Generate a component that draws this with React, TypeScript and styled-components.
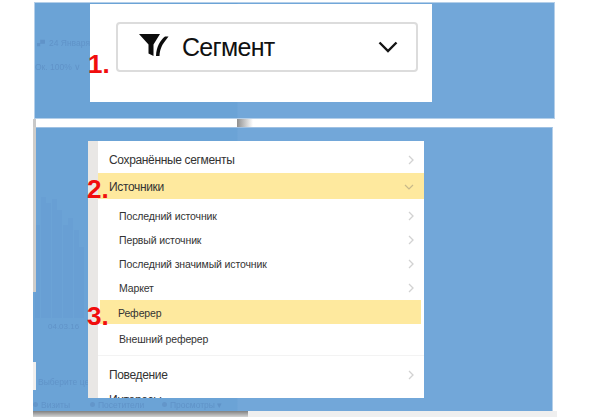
import styled, { createGlobalStyle } from 'styled-components';

const GlobalStyle = createGlobalStyle`
  html, body {
    margin: 0;
    padding: 0;
    background: #fff;
    font-family: 'Liberation Sans', Arial, sans-serif;
  }
`;

const Page = styled.div`
  width: 591px;
  height: 417px;
  overflow: hidden;
  padding: 2px 0 0 33px;
  box-sizing: border-box;
`;

const TopPanel = styled.section`
  width: 521px;
  height: 117px;
  margin-left: 1px;
  box-sizing: border-box;
  border: 1px solid #b4cfe9;
  background: linear-gradient(90deg, #6ba3d6 0 202px, #72a7d9 203px);
  display: flex;
  align-items: flex-start;
`;

const TopGhost = styled.div`
  width: 55px;
  flex: none;
  padding-top: 35px;
  display: flex;
  flex-direction: column;
  gap: 14px;
  white-space: nowrap;
`;

const GhostText = styled.span`
  font-size: 8.5px;
  line-height: 10px;
  color: #6093c8;
  filter: blur(0.4px);
  display: flex;
  align-items: center;
  gap: 4px;
`;

const DateLine = styled(GhostText)`
  padding-left: 2px;
`;

const ScaleLine = styled(GhostText)`
  padding-left: 0;
`;

const Card = styled.div`
  position: relative;
  width: 342px;
  height: 98px;
  margin-top: 1px;
  background: #fff;
  box-sizing: border-box;
  padding: 18px 14px 0 26px;
`;

const Select = styled.div`
  height: 50px;
  box-sizing: border-box;
  border: 2px solid #dcdcdc;
  border-radius: 4px;
  display: flex;
  align-items: center;
  padding: 0 18px 0 21px;
`;

const SelectLabel = styled.span`
  font-size: 25px;
  line-height: 30px;
  letter-spacing: -0.7px;
  color: #111;
  margin-left: 13px;
  flex: 1;
`;

const FunnelSvg = styled.svg`
  margin-bottom: 4px;
  flex: none;
`;

const Marker = styled.span<{ $left: number; $top: number }>`
  position: absolute;
  left: ${p => p.$left}px;
  top: ${p => p.$top}px;
  font-size: 26px;
  line-height: 27px;
  font-weight: 700;
  color: #f10d0d;
  z-index: 2;
`;

const Gap = styled.div`
  width: 520px;
  height: 8px;
  background: linear-gradient(90deg, #c9c9c9 0 3px, #fff 3px 204px, #8f8f8f 204px, #fff 220px);
`;

const LowerPanel = styled.section`
  width: 520px;
  height: 284px;
  box-sizing: border-box;
  border-right: 1px solid #b4cfe9;
  border-top: 1px solid #9fc1e3;
  background: linear-gradient(90deg, #6ba3d6 0 204px, #72a7d9 205px);
  display: flex;
  flex-direction: column;
`;

const PanelBody = styled.div`
  display: flex;
  padding-top: 13px;
  height: 270px;
  box-sizing: border-box;
`;

const ChartColumn = styled.div`
  position: relative;
  width: 55px;
  flex: none;
  display: flex;
  flex-direction: column;
  white-space: nowrap;
  &::before {
    content: '';
    position: absolute;
    left: 0;
    top: -14px;
    width: 3px;
    height: 165px;
    background: #cfcdca;
  }
  &::after {
    content: '';
    position: absolute;
    left: 0;
    top: 221px;
    width: 3px;
    height: 28px;
    background: #f0efee;
  }
`;

const Bars = styled.div`
  height: 164px;
  margin-top: 13px;
  padding-left: 2px;
  display: flex;
  align-items: flex-end;
  gap: 0.5px;
`;

const Bar = styled.div<{ $h: number }>`
  width: 5px;
  height: ${p => p.$h}px;
  background: #689fd4;
`;

const ChartDate = styled(GhostText)`
  font-size: 8px;
  margin-top: 4px;
  margin-left: 15px;
`;

const GoalHint = styled(GhostText)`
  margin-top: 45px;
  margin-left: 5px;
`;

const MenuFrame = styled.div`
  position: relative;
  width: 336px;
  height: 257px;
  flex: none;
`;

const Menu = styled.div`
  height: 100%;
  overflow: hidden;
  background: #fff;
  border-left: 10px solid #e9e7e5;
  box-sizing: border-box;
  color: #333;
`;

const Row = styled.div<{ $h: number; $pt?: number; $active?: boolean }>`
  height: ${p => p.$h}px;
  box-sizing: border-box;
  padding: ${p => p.$pt ?? 0}px 10px 0 11px;
  display: flex;
  align-items: center;
  justify-content: space-between;
  font-size: 12px;
  letter-spacing: -0.35px;
  background: ${p => (p.$active ? '#fee99e' : 'transparent')};
`;

const SubList = styled.div`
  padding-top: 5px;
`;

const SubRow = styled.div<{ $active?: boolean }>`
  height: 24px;
  box-sizing: border-box;
  margin: 0 ${p => (p.$active ? '3px' : '0')} 0 ${p => (p.$active ? '2px' : '0')};
  padding: ${p => (p.$active ? '1px' : '0')} 10px 0 ${p => (p.$active ? '18px' : '21px')};
  display: flex;
  align-items: center;
  justify-content: space-between;
  font-size: 10.5px;
  letter-spacing: -0.13px;
  background: ${p => (p.$active ? '#fee99e' : 'transparent')};
`;

const PlainSubRow = styled(SubRow)`
  margin-top: 3px;
`;

const Divider = styled.div`
  height: 1px;
  margin-top: 4px;
  background: #f3f3f3;
`;

const Legend = styled.div`
  height: 13px;
  display: flex;
  align-items: center;
  white-space: nowrap;
`;

const LegendItem = styled(GhostText)<{ $w: number }>`
  width: ${p => p.$w}px;
  flex: none;
  gap: 3px;
`;

const LegendDot = styled.i`
  width: 5px;
  height: 5px;
  border-radius: 50%;
  background: #6396ca;
`;

const BottomShadow = styled.div`
  width: 524px;
  height: 7px;
  background: linear-gradient(180deg, #808080, #e2e2e2) 0 0 / 215px 100% no-repeat, #efefef;
`;

const Chevron = ({ color = '#d2d2d2' }: { color?: string }) => (
  <svg width="6" height="10" viewBox="0 0 6 10" fill="none">
    <path d="M1 1l4 4-4 4" stroke={color} strokeWidth="1.3" />
  </svg>
);

const DownChevron = () => (
  <svg width="10" height="6" viewBox="0 0 10 6" fill="none">
    <path d="M1 1l4 4 4-4" stroke="#c8b98a" strokeWidth="1.2" />
  </svg>
);

const SegmentIcon = () => (
  <FunnelSvg width="30" height="23" viewBox="0 0 30 23" fill="#0c0c0c">
    <path d="M0 0h21l-6.500 10.500V22l-5-2.500v-9z" />
    <path d="M29.500 2.500l-3.500 0c-5 4-8.500 10-9 19.500h3.500c.3-7 3-12 6-15.500z" />
  </FunnelSvg>
);

const BigChevron = () => (
  <svg width="20" height="12" viewBox="0 0 20 12" fill="none">
    <path d="M1.500 1.500L10 10l8.500-8.500" stroke="#151515" strokeWidth="2.400" />
  </svg>
);

const DateIcon = () => (
  <svg width="10" height="8" viewBox="0 0 10 8" fill="#6093c8">
    <path d="M0 4h4v4H0zM4 0h6v5H4z" />
  </svg>
);

const barHeights = [93, 121, 115, 119, 108, 93, 100, 88, 71];

const subItems = ['Последний источник', 'Первый источник', 'Последний значимый источник', 'Маркет'];

export default function App() {
  return (
    <Page>
      <GlobalStyle />
      <TopPanel>
        <TopGhost>
          <DateLine>
            <DateIcon />
            24 Января
          </DateLine>
          <ScaleLine>Ок. 100% ∨</ScaleLine>
        </TopGhost>
        <Card>
          <Marker $left={-2} $top={47}>1.</Marker>
          <Select>
            <SegmentIcon />
            <SelectLabel>Сегмент</SelectLabel>
            <BigChevron />
          </Select>
        </Card>
      </TopPanel>
      <Gap />
      <LowerPanel>
        <PanelBody>
          <ChartColumn>
            <Bars>
              {barHeights.map((h, i) => (
                <Bar key={i} $h={h} />
              ))}
            </Bars>
            <ChartDate>04.03.16</ChartDate>
            <GoalHint>Выберите цель</GoalHint>
          </ChartColumn>
          <MenuFrame>
            <Menu>
              <Row $h={32} $pt={6}>
                Сохранённые сегменты
                <Chevron />
              </Row>
              <Row $h={26} $pt={2} $active>
                Источники
                <DownChevron />
              </Row>
              <SubList>
                {subItems.map(item => (
                  <SubRow key={item}>
                    {item}
                    <Chevron />
                  </SubRow>
                ))}
                <SubRow $active>Реферер</SubRow>
                <PlainSubRow>Внешний реферер</PlainSubRow>
              </SubList>
              <Divider />
              <Row $h={34} $pt={4}>
                Поведение
                <Chevron />
              </Row>
              <Row $h={20}>Интересы</Row>
            </Menu>
            <Marker $left={-1} $top={35}>2.</Marker>
            <Marker $left={-1} $top={162}>3.</Marker>
          </MenuFrame>
        </PanelBody>
        <Legend>
          <LegendItem $w={57}>
            <LegendDot />
            Визиты
          </LegendItem>
          <LegendItem $w={72}>
            <LegendDot />
            Посетители
          </LegendItem>
          <LegendItem $w={80}>
            <LegendDot />
            Просмотры ▾
          </LegendItem>
        </Legend>
      </LowerPanel>
      <BottomShadow />
    </Page>
  );
}
